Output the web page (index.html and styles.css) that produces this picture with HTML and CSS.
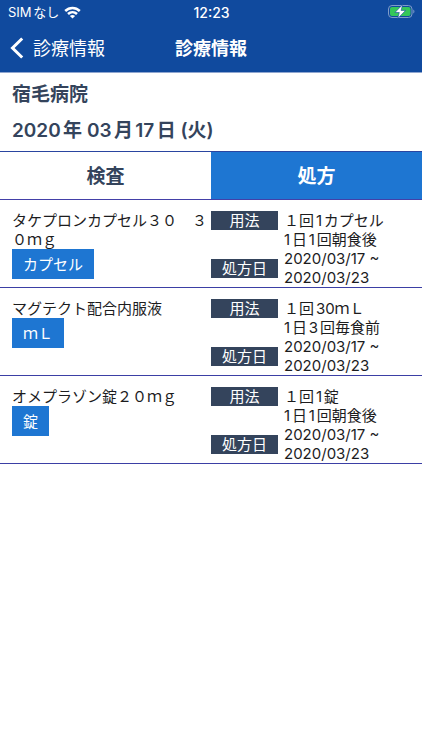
FILE: index.html
```html
<!DOCTYPE html>
<html lang="ja">
<head>
    <meta charset="UTF-8">
    <meta name="viewport" content="width=device-width, initial-scale=1.0">
    <title>診療情報</title>
    <link rel="stylesheet" href="styles.css">
</head>
<body>

<header class="header">
    <div class="status-bar">
        <div class="carrier">
            <span>SIMなし</span>
            <svg width="17" height="13" viewBox="0 0 17 13" fill="none" stroke="#fff" stroke-width="2.5">
                <path d="M1.2 5C5.4 .9 11.6 .9 15.8 5"/>
                <path d="M4 8C6.6 5.500 10.400 5.500 13 8"/>
                <path d="M8.500 12.600L5.900 9.900C7.400 8.600 9.600 8.600 11.100 9.900Z" fill="#fff" stroke="none"/>
            </svg>
        </div>
        <div class="clock">12:23</div>
        <svg class="battery" width="27" height="14" viewBox="0 0 27 14">
            <rect x=".5" y=".5" width="23.500" height="12" rx="3.500" fill="none" stroke="#7f9cc9"/>
            <path d="M25.300 4.500C26.800 5 26.800 8 25.300 8.500Z" fill="#7f9cc9"/>
            <rect x="2" y="2" width="20.500" height="9" rx="2" fill="#34c759"/>
            <path d="M14.600 -.4L7 7.500H11.300L9.700 13.500L17.600 5.400H13.100Z" fill="#fff" stroke="#104a9e" stroke-width=".6"/>
        </svg>
    </div>
    <nav class="nav-bar">
        <a class="back" href="#">
            <svg width="14" height="22" viewBox="0 0 14 22" fill="none" stroke="#fff" stroke-width="3">
                <path d="M12.200 1.500L2.500 11L12.200 20.500"/>
            </svg>
            <span>診療情報</span>
        </a>
        <h1 class="title">診療情報</h1>
    </nav>
</header>

<main>
    <section class="visit">
        <h2>宿毛病院</h2>
        <p>2020年 03月17日 (火)</p>
    </section>

    <div class="tabs">
        <button class="tab" type="button">検査</button>
        <button class="tab active" type="button">処方</button>
    </div>

    <ul class="medicines">
        <li class="medicine">
            <div class="drug">
                <div>タケプロンカプセル３０　３０ｍｇ</div>
                <span class="unit">カプセル</span>
            </div>
            <dl class="details">
                <dt>用法</dt>
                <dd>１回1カプセル<br>1日1回朝食後</dd>
                <dt class="date-label">処方日</dt>
                <dd class="dates">2020/03/17 ~ 2020/03/23</dd>
            </dl>
        </li>
        <li class="medicine">
            <div class="drug">
                <div>マグテクト配合内服液</div>
                <span class="unit">ｍＬ</span>
            </div>
            <dl class="details">
                <dt>用法</dt>
                <dd>１回30ｍＬ<br>1日3回毎食前</dd>
                <dt class="date-label">処方日</dt>
                <dd class="dates">2020/03/17 ~ 2020/03/23</dd>
            </dl>
        </li>
        <li class="medicine">
            <div class="drug">
                <div>オメプラゾン錠２０ｍｇ</div>
                <span class="unit">錠</span>
            </div>
            <dl class="details">
                <dt>用法</dt>
                <dd>１回1錠<br>1日1回朝食後</dd>
                <dt class="date-label">処方日</dt>
                <dd class="dates">2020/03/17 ~ 2020/03/23</dd>
            </dl>
        </li>
    </ul>
</main>

</body>
</html>
```

FILE: styles.css
```css
* {
    box-sizing: border-box;
}

body {
    font-family: Inter, "Noto Sans CJK JP", sans-serif;
    font-size: 15px;
    line-height: 19px;
    text-autospace: normal;
    color: #1c1c1e;
    background-color: #fff;
    margin: 0;
}

h1, h2, p, ul, dl, dd {
    margin: 0;
    padding: 0;
}

.header {
    background-color: #104a9e;
    color: #fff;
    border-bottom: 1px solid #8fa6d0;
}

.status-bar {
    display: grid;
    grid-template-columns: 1fr auto 1fr;
    align-items: center;
    height: 24px;
    padding: 0 7px 0 8px;
    font-size: 13px;
}

.carrier {
    display: flex;
    align-items: center;
    gap: 5px;
}

.clock {
    font-size: 14px;
    font-weight: 500;
}

.battery {
    justify-self: end;
    overflow: visible;
}

.nav-bar {
    display: grid;
    grid-template-columns: 1fr auto 1fr;
    align-items: center;
    height: 48px;
    padding: 0 10px;
}

.back {
    display: flex;
    align-items: center;
    gap: 9px;
    color: #fff;
    font-size: 18px;
    text-decoration: none;
}

.title {
    font-size: 18px;
    font-weight: bold;
}

.visit {
    padding: 9px 12px 7px;
    color: #34445c;
    font-size: 19px;
    font-weight: 600;
    line-height: 26px;
}

.visit h2 {
    font-size: 19px;
    font-weight: 600;
    margin-bottom: 10px;
}

.tabs {
    display: grid;
    grid-template-columns: 1fr 1fr;
    border-top: 1px solid #2a45a0;
    border-bottom: 1px solid #4340a8;
}

.tab {
    height: 47px;
    padding: 0 0 2px;
    border: none;
    background-color: #fff;
    color: #34445c;
    font-family: inherit;
    font-size: 19px;
    font-weight: bold;
}

.tab.active {
    background-color: #1e76d2;
    color: #fff;
}

.medicines {
    list-style: none;
}

.medicine {
    display: grid;
    grid-template-columns: 1fr 1fr;
    padding-top: 11px;
    border-bottom: 1px solid #3b3fa5;
}

.drug {
    padding-left: 12px;
}

.unit {
    display: inline-block;
    padding: 6px 11px 5px;
    background-color: #1e76d2;
    color: #fff;
}

.details {
    display: grid;
    grid-template-columns: 67px 1fr;
    column-gap: 6px;
    align-items: start;
}

.details dt {
    background-color: #34445c;
    color: #fff;
    text-align: center;
}

.details .date-label {
    align-self: center;
}

.details .dates {
    max-width: 110px;
}
```
